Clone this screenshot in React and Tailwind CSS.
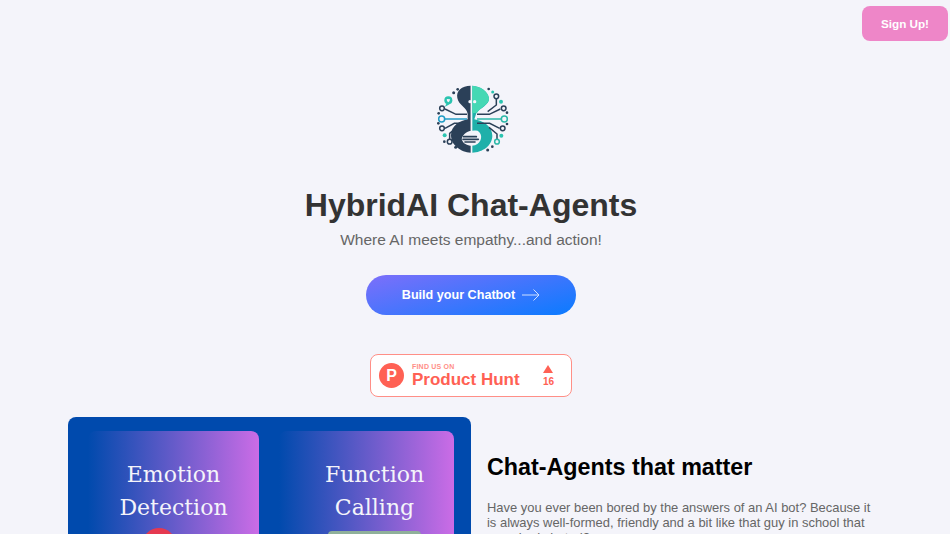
import React from 'react';

const Logo = () => (
  <svg viewBox="0 0 300 300" className="w-[100px] h-[100px] block blur-[0.3px]">
    {/* left / right body */}
    <path d="M149 47 C122 47 105 62 109 84 C113 106 138 112 140 132 L140 148 C118 152 90 167 90 196 C90 226 120 247 149 248 Z" fill="#2b4058" />
    <path d="M154 47 C178 49 200 62 204 84 C207 104 176 114 166 130 L160 148 C184 152 214 168 214 197 C214 227 184 247 154 248 Z" fill="#1fb0aa" />
    <path d="M154 47 C178 49 200 62 204 84 C207 102 178 112 168 128 L154 130 Z" fill="#45d8b4" />
    {/* brain */}
    <path d="M122 207 C126 188 146 178 170 182 C186 192 184 216 162 226 C146 230 126 224 122 207 Z" fill="#f4f4fa" />
    <path d="M128 200 H166 M126 208 H172 M132 216 H162" stroke="#2b4058" strokeWidth="5" strokeLinecap="round" />
    <path d="M151 47 V182" stroke="#f4f4fa" strokeWidth="2.5" />
    <circle cx="147" cy="95" r="5" fill="#f4f4fa" />
    <circle cx="161" cy="95" r="5" fill="#f4f4fa" />
    {/* left traces */}
    <g fill="none" stroke="#2b4058" strokeWidth="4.5">
      <path d="M72 117 L105 133 H138" />
      <path d="M72 147 H138" stroke="#1f9bc4" />
      <path d="M72 175 L100 160 H138" />
      <path d="M86 208 V190 L110 170 H130" />
      <circle cx="63" cy="115" r="7" />
      <circle cx="63" cy="175" r="7" />
      <circle cx="86" cy="215" r="7" />
      <circle cx="62" cy="147" r="9" stroke="#1f9bc4" />
    </g>
    {/* right traces */}
    <g fill="none" stroke="#2b4058" strokeWidth="4.5">
      <path d="M238 117 L205 133 H168" />
      <path d="M240 147 H168" stroke="#2bb8a8" />
      <path d="M236 175 L206 160 H168" />
      <path d="M226 86 V105 L200 125" />
      <path d="M228 208 V192 L204 172" />
      <circle cx="226" cy="79" r="7" />
      <circle cx="248" cy="115" r="7" />
      <circle cx="245" cy="175" r="7" />
      <circle cx="228" cy="215" r="7" stroke="#2bb8a8" />
      <circle cx="250" cy="147" r="9" stroke="#2bb8a8" />
    </g>
    {/* heart bubble */}
    <circle cx="82" cy="91" r="12" fill="#2bc4b0" />
    <path d="M76 101 L72 110 L86 103 Z" fill="#2bc4b0" />
    <path d="M82 97 C75 92 76 85 82 88 C88 85 89 92 82 97 Z" fill="#f4f4fa" />
    {/* dots */}
    <g fill="#2b4058">
      <circle cx="98" cy="68" r="4.5" />
      <circle cx="110" cy="58" r="4" />
      <circle cx="53" cy="130" r="4" />
      <circle cx="52" cy="160" r="4" />
      <circle cx="70" cy="215" r="4" />
      <circle cx="104" cy="232" r="4.5" />
      <circle cx="200" cy="240" r="4.5" />
      <circle cx="214" cy="230" r="4" />
      <circle cx="258" cy="128" r="4" />
      <circle cx="258" cy="162" r="4" />
      <circle cx="203" cy="57" r="4" />
    </g>
    <g fill="#2bc4b0">
      <circle cx="71" cy="196" r="6" />
      <circle cx="240" cy="95" r="6" />
      <circle cx="241" cy="197" r="6" />
      <circle cx="215" cy="66" r="4.5" />
    </g>
  </svg>
);

const Hero = () => (
  <section className="flex flex-col items-center pr-2">
    <div className="mt-[29px]"><Logo /></div>
    <h1 className="mt-[15px] text-[32px] leading-[40px] font-bold text-[#333333]">HybridAI Chat-Agents</h1>
    <p className="mt-[5px] text-[15.5px] leading-[20px] text-[#666666]">Where AI meets empathy...and action!</p>
    <a className="mt-[25px] w-[210px] h-10 rounded-full bg-linear-165/srgb from-[#7d6ffa] to-[#0a7bff] flex items-center justify-center gap-[7px] text-[12.6px] font-bold text-white">
      Build your Chatbot
      <svg viewBox="0 0 18 12" className="w-[18px] h-3" fill="none" stroke="#cfe0ff" strokeWidth="1">
        <path d="M0 6 H17 M11.5 0.5 L17 6 L11.5 11.5" />
      </svg>
    </a>
    <div className="mt-[39px] w-[202px] h-[43px] bg-white border border-[#ff8f87] rounded-lg flex items-center pl-2 pr-[17px]">
      <div className="w-[25px] h-[25px] rounded-full bg-[#ff6154] flex items-center justify-center text-white font-bold text-base leading-none">P</div>
      <div className="ml-2 flex flex-col">
        <span className="text-[7px] leading-[8px] font-bold text-[#ff8f87] tracking-[0.2px]">FIND US ON</span>
        <span className="text-[17px] leading-[18px] font-bold text-[#ff6154]">Product Hunt</span>
      </div>
      <div className="ml-auto flex flex-col items-center gap-[3px]">
        <div className="w-0 h-0 border-l-[5px] border-r-[5px] border-b-[8px] border-l-transparent border-r-transparent border-b-[#ff6154]" />
        <span className="text-[10px] leading-[11px] font-bold text-[#ff6154]">16</span>
      </div>
    </div>
  </section>
);

const Card = ({ title, className, children }) => (
  <div className={`h-[300px] rounded-lg bg-linear-to-r/srgb from-[#004aad] to-[#cb6ce6] pt-[27px] flex flex-col items-center shrink-0 ${className}`}>
    <h3 className="text-[22px] leading-[33px] font-normal text-[#f4f4fa] text-center" style={{ fontFamily: '"DejaVu Serif", serif' }}>{title}</h3>
    {children}
  </div>
);

const Features = () => (
  <section className="mt-5 flex items-start">
    <div className="ml-[68px] w-[403px] h-[300px] shrink-0 bg-[#004aad] rounded-lg pt-[14px] pl-5 flex gap-[20px]">
      <Card title={<>Emotion<br />Detection</>} className="w-[171px]">
        <div className="mt-[4px] w-[34px] h-[34px] rounded-full bg-[#e53950] mr-[30px]" />
      </Card>
      <Card title={<>Function<br />Calling</>} className="w-[175px] pl-4">
        <div className="mt-[7px] w-[93px] h-10 rounded-sm bg-[#8fb09a]" />
      </Card>
    </div>
    <div className="ml-4 w-[390px] pt-[36px]">
      <h2 className="text-[23.3px] leading-7 font-bold text-black">Chat-Agents that matter</h2>
      <p className="mt-[19px] text-[12.95px] leading-[15px] text-[#666666]">
        Have you ever been bored by the answers of an AI bot? Because it is always well-formed, friendly and a bit like that guy in school that everybody hated?
      </p>
    </div>
  </section>
);

const App = () => (
  <div className="h-[534px] overflow-hidden bg-[#f4f4fa]" style={{ fontFamily: '"Liberation Sans", Arial, sans-serif' }}>
    <header className="flex justify-end pt-[6px] pr-[2px]">
      <button className="w-[86px] h-[35px] rounded-lg bg-[#ee86c8] text-[11.7px] font-bold text-white">Sign Up!</button>
    </header>
    <Hero />
    <Features />
  </div>
);

export default App;
